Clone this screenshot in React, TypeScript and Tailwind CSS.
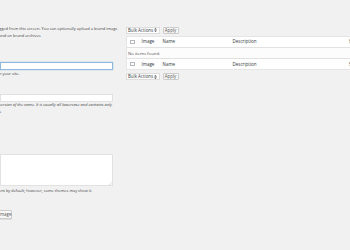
const Checkbox = () => (
  <span className="block w-[4.5px] h-[4.5px] ml-[3px] border-[0.5px] border-[#b4b9be] bg-white" />
);

const BulkActions = () => (
  <div className="flex items-center">
    <div className="w-[34px] h-[7px] flex items-center justify-between pl-[1px] pr-[2px] bg-white border-[0.5px] border-[#ddd] text-[4.4px] text-[#32373c] whitespace-nowrap">
      <span>Bulk Actions</span>
      <svg width="3" height="4" viewBox="0 0 3 4" className="shrink-0">
        <path d="M1.5 0 L3 1.6 H0 Z M1.5 4 L3 2.4 H0 Z" fill="#555" />
      </svg>
    </div>
    <button className="ml-[2.5px] w-[16px] h-[7px] flex items-center justify-center bg-[#f7f7f7] border-[0.5px] border-[#ccc] rounded-[1px] text-[4.4px] text-[#555]">
      Apply
    </button>
  </div>
);

const HeaderRow = ({ bottom }: { bottom?: boolean }) => (
  <div
    className={`flex items-center h-[10.7px] text-[4.5px] text-[#32373c] ${
      bottom ? "border-t-[0.5px]" : "border-b-[0.5px]"
    } border-[#e1e1e1]`}
  >
    <div className="w-[14.5px] shrink-0">
      <Checkbox />
    </div>
    <div className="w-[21px] shrink-0">Image</div>
    <div className="w-[70px] shrink-0">Name</div>
    <div className="w-[116.5px] shrink-0">Description</div>
    <div className="shrink-0">S</div>
  </div>
);

export default function App() {
  return (
    <div className="w-[350px] h-[250px] overflow-hidden bg-[#f1f1f1] flex font-['Open_Sans',sans-serif]">
      <div className="w-[113px] shrink-0 pt-[26px] flex flex-col">
        <p className="text-[4px] leading-[6.7px] text-[#444] whitespace-nowrap -ml-[1px]">
          gged from this screen. You can optionally upload a brand image
          <br />
          and on brand archives
        </p>
        <div className="mt-[22.5px] h-[8px] bg-white border-[0.5px] border-[#8fb9dc] shadow-[0_0_1px_rgba(30,140,190,0.5)]" />
        <p className="mt-[1px] text-[4px] leading-[6.7px] text-[#444] whitespace-nowrap -ml-[1px]">
          n your site.
        </p>
        <div className="mt-[16.3px] h-[8px] bg-white border-[0.5px] border-[#e2e2e2]" />
        <p className="mt-[0.5px] text-[4px] leading-[6.5px] text-[#444] italic whitespace-nowrap -ml-[1px]">
          version of the name. It is usually all lowercase and contains only
          <br />
          s.
        </p>
        <div className="mt-[39px] h-[32px] bg-white border-[0.5px] border-[#e2e2e2] relative">
          <svg className="absolute right-[0.5px] bottom-[0.5px]" width="3" height="3" viewBox="0 0 3 3">
            <path d="M3 0 L0 3 M3 1.5 L1.5 3" stroke="#bbb" strokeWidth="0.4" />
          </svg>
        </div>
        <p className="mt-[2px] text-[3.9px] leading-[6.7px] text-[#444] whitespace-nowrap -ml-[1px]">
          ent by default; however, some themes may show it.
        </p>
        <div className="mt-[15px] flex">
          <button className="-ml-[2px] pl-[1px] w-[14px] h-[8.6px] flex items-center bg-[#f7f7f7] border-[0.5px] border-[#ccc] rounded-[1px] text-[4.4px] text-[#555] shadow-[0_0.5px_0_#ccc]">
            mage
          </button>
        </div>
      </div>

      <div className="ml-[13px] w-[260px] shrink-0 pt-[26.5px] flex flex-col">
        <BulkActions />
        <div className="mt-[2.5px] bg-white border-[0.5px] border-[#e5e5e5]">
          <HeaderRow />
          <div className="flex items-center h-[10.7px] pl-[1px] text-[4.3px] text-[#555] bg-[#fcfcfc]">
            No items found.
          </div>
          <HeaderRow bottom />
        </div>
        <div className="mt-[3px]">
          <BulkActions />
        </div>
      </div>
    </div>
  );
}
